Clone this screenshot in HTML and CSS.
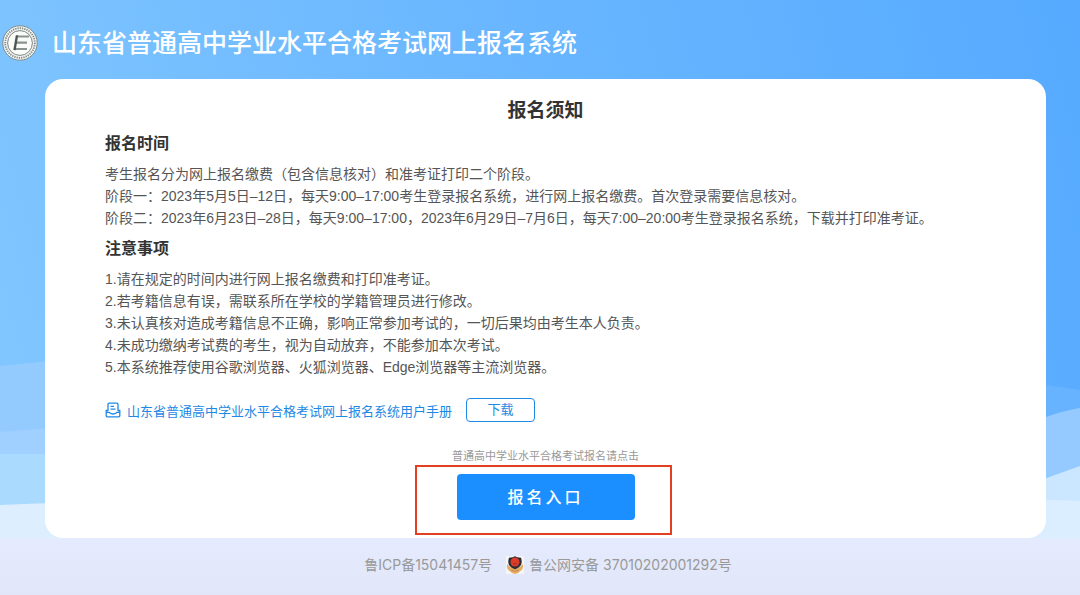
FILE: index.html
```
<!DOCTYPE html>
<html lang="zh-CN">
<head>
	<meta charset="UTF-8">
	<meta name="viewport" content="width=device-width, initial-scale=1">
	<title>山东省普通高中学业水平合格考试网上报名系统</title>
	<link rel="stylesheet" href="styles.css">
</head>
<body>
	<div class="main">
		<!-- 背景波浪 -->
		<svg class="bg" viewBox="0 0 1080 538" preserveAspectRatio="none" aria-hidden="true">
			<path d="M0 366L100 356V538H0Z" fill="#94cbff"/>
			<path d="M0 432L100 424V538H0Z" fill="#9fd0ff"/>
			<path d="M0 454H100V538H0Z" fill="#abdaff"/>
			<path d="M0 505L100 501L540 520V538H0Z" fill="#ddeeff"/>
			<path d="M980 375L1080 390V538H980Z" fill="#68b3ff"/>
			<path d="M980 445Q1050 412 1080 408V538H980Z" fill="#94caff"/>
			<path d="M980 502L1080 466V538H980Z" fill="#cbe6ff"/>
			<path d="M540 520L980 497L1080 501V538H540Z" fill="#dbeeff"/>
		</svg>
		<header class="header">
			<svg class="logo" viewBox="0 0 36 36" aria-hidden="true">
				<circle cx="18" cy="18" r="17.2" fill="#f4f6f4" stroke="#7d8c88" stroke-width="1"/>
				<circle cx="18" cy="18" r="14.8" fill="none" stroke="#7f8985" stroke-width="1.8" stroke-dasharray="1.3 1"/>
				<circle cx="18" cy="18" r="12.4" fill="#fafcfa" stroke="#7b8682" stroke-width="1"/>
				<path d="M14 11.5H27M13 17.7H25M12 24H25" fill="none" stroke="#8b928f" stroke-width="2.2"/>
				<path d="M15 10.4L12.5 25.1" fill="none" stroke="#4e5653" stroke-width="2.4"/>
			</svg>
			<h1>山东省普通高中学业水平合格考试网上报名系统</h1>
		</header>
		<div class="card">
			<h2 class="title">报名须知</h2>
			<h3>报名时间</h3>
			<div class="text">
				<p>考生报名分为网上报名缴费（包含信息核对）和准考证打印二个阶段。</p>
				<p>阶段一：2023年5月5日–12日，每天9:00–17:00考生登录报名系统，进行网上报名缴费。首次登录需要信息核对。</p>
				<p>阶段二：2023年6月23日–28日，每天9:00–17:00，2023年6月29日–7月6日，每天7:00–20:00考生登录报名系统，下载并打印准考证。</p>
			</div>
			<h3>注意事项</h3>
			<div class="text">
				<p>1.请在规定的时间内进行网上报名缴费和打印准考证。</p>
				<p>2.若考籍信息有误，需联系所在学校的学籍管理员进行修改。</p>
				<p>3.未认真核对造成考籍信息不正确，影响正常参加考试的，一切后果均由考生本人负责。</p>
				<p>4.未成功缴纳考试费的考生，视为自动放弃，不能参加本次考试。</p>
				<p>5.本系统推荐使用谷歌浏览器、火狐浏览器、Edge浏览器等主流浏览器。</p>
			</div>
			<div class="manual">
				<a href="#">
					<svg viewBox="0 0 16 16" aria-hidden="true">
						<path d="M3 9V2.2Q3 1.2 4 1.2H12Q13 1.2 13 2.2V9M5.5 4.4H9M5.5 7.2H10.5M3 8.5H1.2V13.8Q1.2 14.8 2.2 14.8H13.8Q14.8 14.8 14.8 13.8V8.5H13M1.2 10.3H4.2Q5 12 8 12T11.8 10.3H14.8" fill="none" stroke="currentColor" stroke-width="1.3"/>
					</svg>
					<span>山东省普通高中学业水平合格考试网上报名系统用户手册</span>
				</a>
				<button type="button" class="download">下载</button>
			</div>
			<div class="enter">
				<p>普通高中学业水平合格考试报名请点击</p>
				<div class="enter-box">
					<button type="button" class="enter-btn">报名入口</button>
				</div>
			</div>
		</div>
	</div>
	<footer class="footer">
		<a href="#">鲁ICP备15041457号</a>
		<a href="#">
			<svg viewBox="0 0 18 18" aria-hidden="true">
				<path d="M0 0H18V18H0Z" fill="#f7f5f3"/>
				<path d="M1.2 8Q0 13 4 15.2Q6 18 9 18T14 15.2Q18 13 16.8 8L14 11H4Z" fill="#e5ae68"/>
				<path d="M9 .2Q11 1.6 15 1.8Q16.2 5 15.4 8Q14 11.6 9 13.2Q4 11.6 2.6 8Q1.8 5 3 1.8Q7 1.6 9 .2Z" fill="#2c2b38"/>
				<circle cx="9" cy="6" r="4.5" fill="#dc3d28"/>
				<path d="M7 7.8H11" stroke="#a62c25"/>
				<path d="M5 14Q9 16.5 13 14" fill="none" stroke="#c98843"/>
			</svg>
			<span>鲁公网安备 37010202001292号</span>
		</a>
	</footer>
</body>
</html>
```
FILE: styles.css
```
*{margin:0;padding:0;box-sizing:border-box}
body{
	min-height:100vh;
	display:flex;
	flex-direction:column;
	font-family:"Liberation Sans","Noto Sans CJK SC",sans-serif;
	font-size:14px;
	color:#555;
	background:#e4eafc;
}
a{
	text-decoration:none;
}
button{
	font-family:inherit;
	cursor:pointer;
}
.main{
	position:relative;
	padding:0 34px 0 45px;
	background:linear-gradient(75deg, #82c7ff 0%, #6ab7ff 50%, #56aaff 100%);
}
.bg{
	position:absolute;
	left:0;
	top:0;
	width:100%;
	height:100%;
}
.header{
	position:relative;
	display:flex;
	align-items:center;
	height:79px;
	margin-left:-43px;
	padding-top:6px;
}
.logo{
	width:36px;
	height:36px;
	margin-right:14px;
}
.header h1{
	font-size:25px;
	line-height:36px;
	font-weight:500;
	color:#fff;
}

/* 内容卡片 */
.card{
	position:relative;
	padding:18px 60px;
	border-radius:18px;
	background:#fff;
}
.title{
	margin-bottom:8px;
	font-size:19px;
	line-height:28px;
	text-align:center;
	color:#333;
}
.card h3{
	margin-bottom:8px;
	font-size:16px;
	line-height:22px;
	color:#333;
}
.text{
	margin-bottom:9px;
	line-height:22px;
}
.manual{
	display:flex;
	align-items:center;
	margin-top:20px;
	font-size:13px;
}
.manual a{
	display:flex;
	align-items:center;
	color:#1e88e5;
}
.manual svg{
	width:16px;
	height:16px;
	margin-right:6px;
}
.download{
	width:69px;
	height:24px;
	margin-left:14px;
	border:1px solid #1e88e5;
	border-radius:4px;
	font-size:13px;
	line-height:22px;
	color:#1e88e5;
	background:#fff;
}
.enter{
	display:flex;
	flex-direction:column;
	align-items:center;
	margin-top:26px;
}
.enter p{
	margin-bottom:10px;
	font-size:11px;
	line-height:16px;
	color:#999;
}
.enter-box{
	position:relative;
}
.enter-box::after{
	content:"";
	position:absolute;
	top:-9px;
	right:-37px;
	bottom:-15px;
	left:-42px;
	border:2px solid #e2401f;
	pointer-events:none;
}
.enter-btn{
	display:block;
	width:178px;
	height:46px;
	padding-bottom:2px;
	border:none;
	border-radius:4px;
	font-size:16px;
	font-weight:500;
	letter-spacing:3px;
	color:#fff;
	background:#1b8fff;
}

/* 备案信息 */
.footer{
	flex:1;
	display:flex;
	justify-content:center;
	align-items:center;
	gap:14px;
	padding:14px 0 18px 16px;
	font-family:Inter,"Noto Sans CJK SC",sans-serif;
	line-height:24px;
	background:linear-gradient(#e5ebfe, #e1e7f8);
}
.footer a{
	display:flex;
	align-items:center;
	color:#999;
}
.footer svg{
	width:18px;
	height:18px;
	margin-right:5px;
}
```
